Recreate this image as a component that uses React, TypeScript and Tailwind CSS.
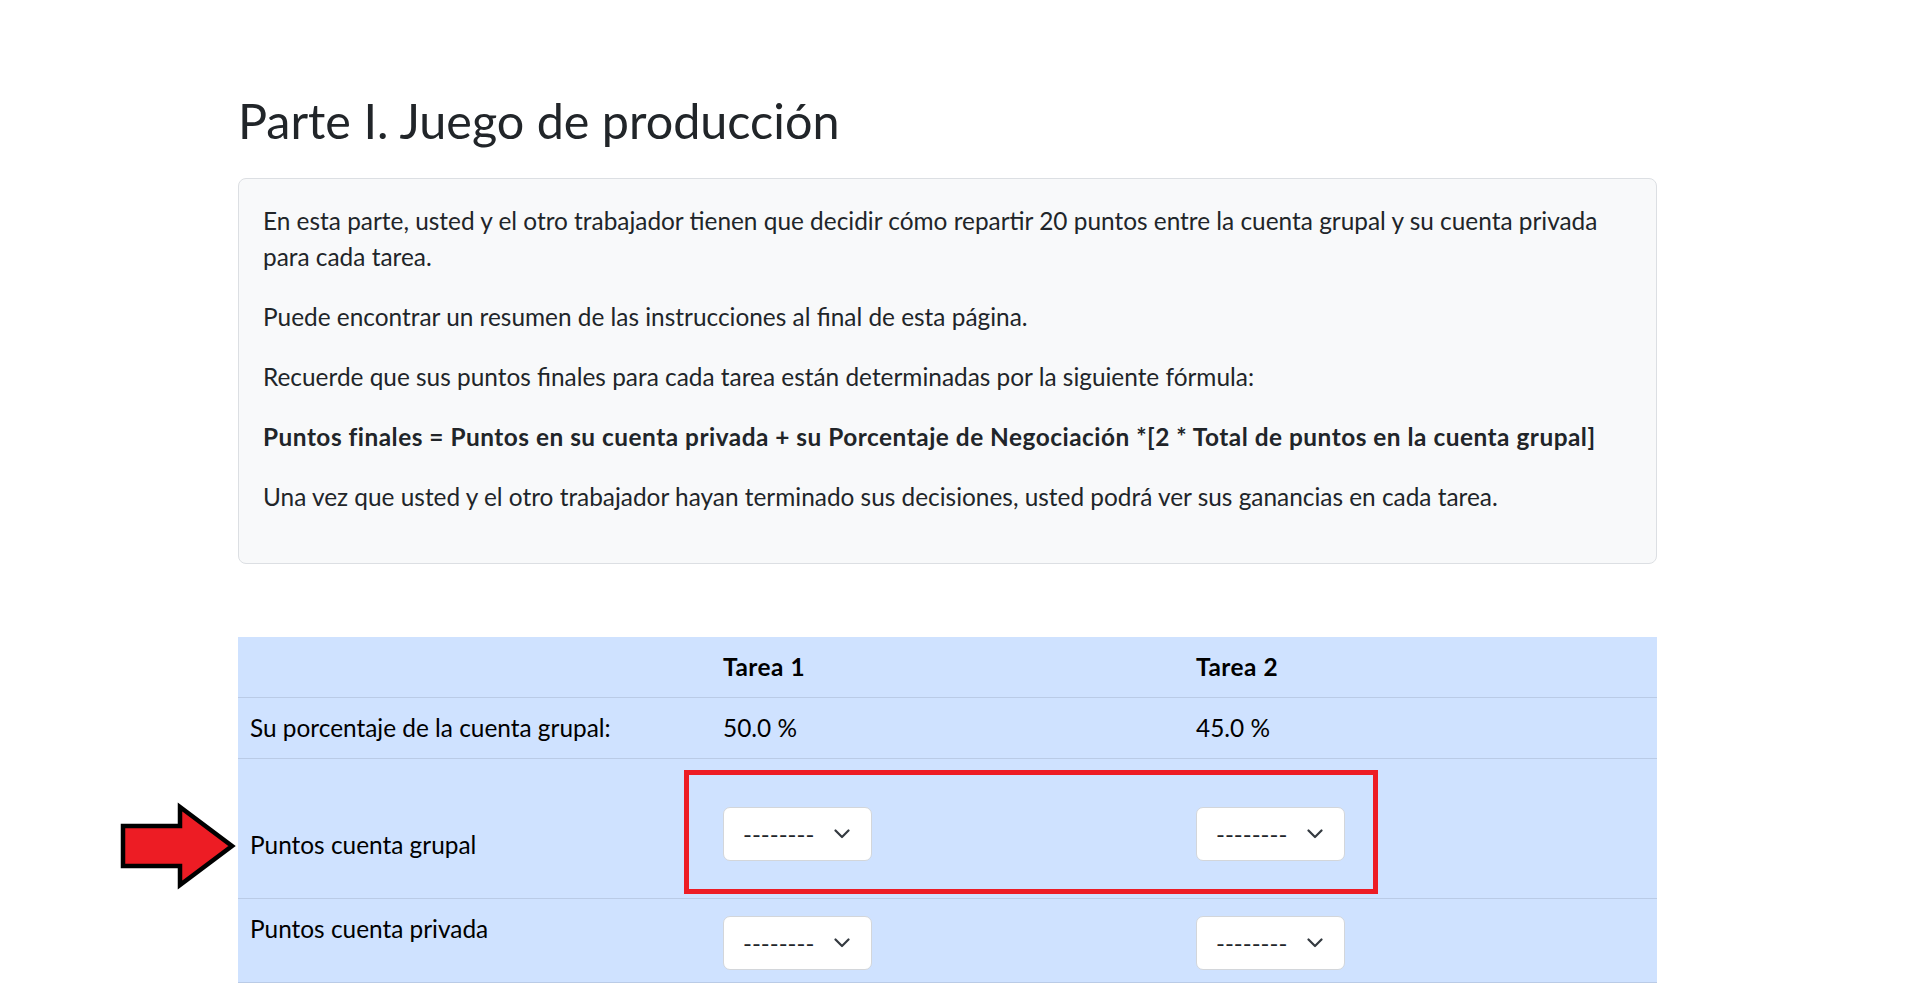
import React from "react";

const paragraphs = [
  "En esta parte, usted y el otro trabajador tienen que decidir cómo repartir 20 puntos entre la cuenta grupal y su cuenta privada para cada tarea.",
  "Puede encontrar un resumen de las instrucciones al final de esta página.",
  "Recuerde que sus puntos finales para cada tarea están determinadas por la siguiente fórmula:",
];

function Chevron() {
  return (
    <svg
      width="16"
      height="10"
      viewBox="0 0 16 10"
      className="pointer-events-none absolute right-[22px] top-1/2 -translate-y-1/2"
    >
      <path
        d="M1.5 1.5 8 8l6.5-6.5"
        fill="none"
        stroke="#343a40"
        strokeWidth="2.2"
        strokeLinecap="round"
        strokeLinejoin="round"
      />
    </svg>
  );
}

function PointsSelect() {
  return (
    <div className="relative h-[54px] w-[149px]">
      <select
        defaultValue=""
        className="h-full w-full appearance-none rounded-[7px] border border-[#d3d6da] bg-white pl-[19px] pr-[50px] font-[Lato,sans-serif] text-[24px] leading-[36px] text-[#212529] outline-none"
      >
        <option value="">--------</option>
      </select>
      <Chevron />
    </div>
  );
}

function Arrow() {
  return (
    <svg
      width="124"
      height="92"
      viewBox="0 0 124 92"
      className="absolute left-[-120px] top-[164px]"
    >
      <polygon
        points="5,25 62,25 62,6 114,45 62,84 62,65 5,65"
        fill="#ed1c24"
        stroke="#000"
        strokeWidth="4.5"
        strokeLinejoin="miter"
      />
    </svg>
  );
}

export default function App() {
  return (
    <div className="min-h-screen bg-white pt-[92px] pb-[40px] font-[Lato,sans-serif] text-[#212529]">
      <div className="ml-[238px] w-[1419px]">
        <h2 className="mb-[28px] text-[48.5px] font-normal leading-[57.6px]">
          Parte I. Juego de producción
        </h2>

        <div className="rounded-[8px] border border-[#dcdfe3] bg-[#f8f9fa] p-[24px] text-[24.4px] leading-[36px]">
          {paragraphs.map((p) => (
            <p key={p} className="mb-[24px]">
              {p}
            </p>
          ))}
          <p className="mb-[24px] font-bold tracking-[0.5px]">
            Puntos finales = Puntos en su cuenta privada + su Porcentaje de
            Negociación *[2 * Total de puntos en la cuenta grupal]
          </p>
          <p className="mb-[24px]">
            Una vez que usted y el otro trabajador hayan terminado sus
            decisiones, usted podrá ver sus ganancias en cada tarea.
          </p>
        </div>

        <div className="relative mt-[73px]">
          <table className="w-full table-fixed border-collapse bg-[#cfe2ff] text-left text-[24.4px] leading-[36px] text-black">
            <thead>
              <tr className="border-b border-[#bacbe6]">
                <th className="p-[12px] font-bold"></th>
                <th className="p-[12px] font-bold tracking-[0.5px]">Tarea 1</th>
                <th className="p-[12px] font-bold tracking-[0.5px]">Tarea 2</th>
              </tr>
            </thead>
            <tbody>
              <tr className="border-b border-[#bacbe6] align-top">
                <td className="p-[12px]">Su porcentaje de la cuenta grupal:</td>
                <td className="p-[12px]">50.0 %</td>
                <td className="p-[12px]">45.0 %</td>
              </tr>
              <tr className="border-b border-[#bacbe6] align-top">
                <td className="px-[12px] pt-[68px]">Puntos cuenta grupal</td>
                <td className="px-[12px] pt-[48px] pb-[37px]">
                  <PointsSelect />
                </td>
                <td className="px-[12px] pt-[48px] pb-[37px]">
                  <PointsSelect />
                </td>
              </tr>
              <tr className="border-b border-[#bacbe6] align-top">
                <td className="px-[12px] pt-[12px]">Puntos cuenta privada</td>
                <td className="px-[12px] pt-[17px] pb-[12px]">
                  <PointsSelect />
                </td>
                <td className="px-[12px] pt-[17px] pb-[12px]">
                  <PointsSelect />
                </td>
              </tr>
            </tbody>
          </table>

          {/* annotation overlays */}
          <div className="pointer-events-none absolute left-[446px] top-[133px] h-[124px] w-[694px] border-[5px] border-[#ed1c24]"></div>
          <Arrow />
        </div>
      </div>
    </div>
  );
}
